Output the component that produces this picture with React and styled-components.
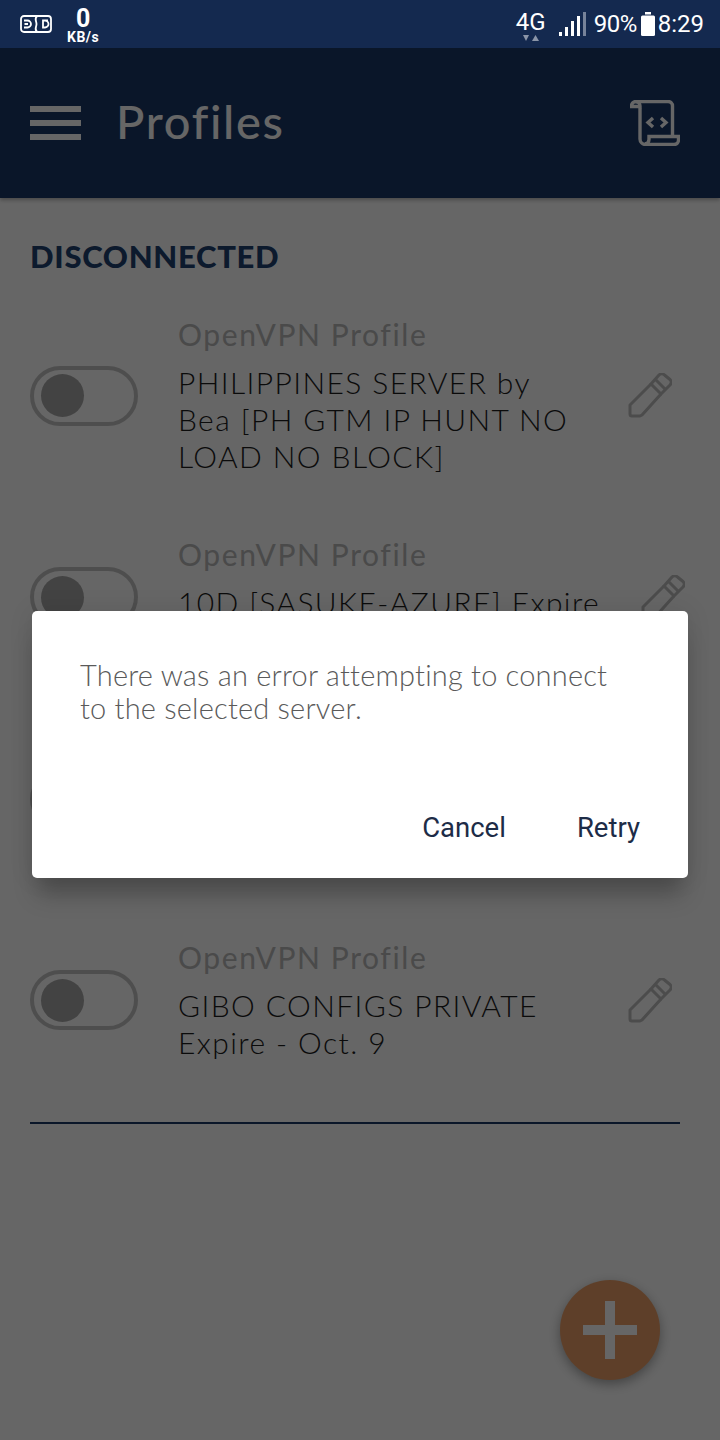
import * as React from 'react';
import styled, { createGlobalStyle } from 'styled-components';

const GlobalStyle = createGlobalStyle`
  html, body {
    margin: 0;
    padding: 0;
    background-color: #ffffff;
  }
`;

const Page = styled.div`
  position: relative;
  width: 720px;
  height: 1440px;
  overflow: hidden;
  font-family: Lato, "Open Sans", sans-serif;
  background-color: #ffffff;
`;

const StatusBar = styled.div`
  position: relative;
  z-index: 2;
  display: flex;
  justify-content: space-between;
  align-items: center;
  height: 48px;
  color: #ffffff;
  font-family: Roboto, sans-serif;
  background-color: #14294f;
  padding-left: 20px;
  padding-right: 16px;
`;

const StatusGroup = styled.div`
  display: flex;
  align-items: center;
`;

const Speed = styled.div`
  display: flex;
  flex-direction: column;
  align-items: center;
  margin-left: 15px;
  font-weight: 700;
`;

const SpeedValue = styled.span`
  font-size: 25px;
  line-height: 23px;
  margin-top: 3px;
`;

const SpeedUnit = styled.span`
  font-size: 14px;
  letter-spacing: 0.5px;
  line-height: 15px;
`;

const Network = styled.div`
  display: flex;
  flex-direction: column;
  align-items: center;
  margin-right: 13px;
`;

const NetworkLabel = styled.span`
  font-size: 24px;
  line-height: 26px;
  margin-top: 2px;
`;

const StatusText = styled.span`
  font-size: 24px;
  letter-spacing: ${props => props.$spacing || 0}px;
  line-height: 48px;
  margin-left: ${props => props.$left}px;
  margin-right: ${props => props.$right || 0}px;
`;

const AppBar = styled.header`
  display: flex;
  align-items: center;
  height: 150px;
  box-sizing: border-box;
  background-color: #193768;
  box-shadow: 0 2px 4px rgba(0, 0, 0, 0.3);
  padding-left: 30px;
  padding-right: 40px;
`;

const Hamburger = styled.div`
  display: flex;
  flex-direction: column;
  gap: 8px;
  width: 51px;
  margin-right: 35px;

  span {
    height: 6px;
    background-color: #ffffff;
  }
`;

const Title = styled.h1`
  flex-grow: 1;
  font-size: 47px;
  font-weight: 500;
  letter-spacing: 1.7px;
  line-height: 1;
  color: #ffffff;
  margin: 0;
  margin-top: -3px;
`;

const Content = styled.main`
  padding-left: 30px;
  padding-right: 40px;
`;

const Heading = styled.h2`
  font-size: 31px;
  font-weight: 900;
  letter-spacing: 0.7px;
  line-height: 40px;
  color: #1f4170;
  margin-top: 38px;
  margin-bottom: 40px;
`;

const Profile = styled.div`
  display: grid;
  grid-template-columns: 108px 1fr 45px;
  column-gap: 40px;
  align-items: center;
  margin-bottom: 61px;
  padding-right: 8px;
`;

const Toggle = styled.div`
  display: flex;
  align-items: center;
  width: 108px;
  height: 60px;
  box-sizing: border-box;
  border: 4px solid #c4c4c4;
  border-radius: 30px;
  padding-left: 7px;
`;

const Knob = styled.div`
  width: 43px;
  height: 43px;
  background-color: #a8a8a8;
  border-radius: 50%;
`;

const ProfileKind = styled.div`
  min-height: 37px;
  font-size: 30px;
  letter-spacing: 1.6px;
  line-height: 37px;
  color: #b8b8b8;
  margin-bottom: 11px;
`;

const ProfileName = styled.div`
  min-height: ${props => props.$minLines * 37}px;
  font-size: 30px;
  font-weight: 300;
  letter-spacing: 1.4px;
  line-height: 37px;
  color: #1c1c1c;
`;

const ProfileLine = styled.div`
  white-space: nowrap;
`;

const Divider = styled.hr`
  height: 2px;
  background-color: #193768;
  border: 0;
  margin: 0;
`;

const Fab = styled.button`
  position: absolute;
  right: 60px;
  bottom: 60px;
  display: flex;
  justify-content: center;
  align-items: center;
  width: 100px;
  height: 100px;
  background-color: #ec9f66;
  border: 0;
  border-radius: 50%;
  box-shadow: 0 4px 12px rgba(0, 0, 0, 0.35);
  padding: 0;
`;

const Scrim = styled.div`
  position: absolute;
  top: 48px;
  left: 0;
  right: 0;
  bottom: 0;
  display: flex;
  justify-content: center;
  align-items: center;
  background-color: rgba(0, 0, 0, 0.6);
`;

const Dialog = styled.div`
  display: flex;
  flex-direction: column;
  width: 656px;
  height: 267px;
  box-sizing: border-box;
  background-color: #ffffff;
  border-radius: 5px;
  box-shadow: 0 22px 22px -6px rgba(0, 0, 0, 0.25), 0 0 24px rgba(0, 0, 0, 0.1);
  padding-top: 47px;
  padding-right: 48px;
  padding-bottom: 32px;
  padding-left: 48px;
`;

const Message = styled.p`
  flex-grow: 1;
  font-size: 29px;
  font-weight: 300;
  letter-spacing: 0.2px;
  line-height: 33px;
  color: #5a5a5a;
  margin: 0;
`;

const Actions = styled.div`
  display: flex;
  justify-content: flex-end;
  gap: 71px;
`;

const Action = styled.button`
  font-family: Roboto, sans-serif;
  font-size: 27.5px;
  line-height: 36px;
  color: #1d2c47;
  background: none;
  border: 0;
  padding: 0;
`;

const SimIcon = () => (
  <svg width="32" height="18" viewBox="0 0 32 18" fill="none" stroke="#fff" strokeWidth="1.8">
    <rect x="1" y="1" width="30" height="16" rx="3" />
    <path d="M4 5.500h3.500a3.500 3.500 0 0 1 0 7H4M4.500 9h3.500" />
    <path d="M17 1c-3 3-.5 5-.5 8s-2.500 5 .5 8" />
    <path d="M28 5.500h-5v7h2a3.500 3.500 0 0 0 0-7" />
  </svg>
);

const NetworkArrows = () => (
  <svg width="16" height="7" viewBox="0 0 16 7" fill="#8b95a8">
    <path d="M0 0h6L3 6z" />
    <path d="M9 6h7l-3.500-6z" />
  </svg>
);

const SignalIcon = () => (
  <svg width="27" height="24" viewBox="0 0 27 24">
    <rect x="0" y="20" width="3" height="4" fill="#fff" />
    <rect x="6" y="15" width="3" height="9" fill="#fff" />
    <rect x="12" y="9" width="3" height="15" fill="#fff" />
    <rect x="18" y="4" width="3" height="20" fill="#fff" />
    <rect x="24" y="0" width="3" height="24" fill="#77839a" />
  </svg>
);

const BatteryIcon = () => (
  <svg width="14" height="24" viewBox="0 0 14 24" fill="#fff">
    <rect x="4" y="0" width="6" height="2.500" />
    <rect x="0" y="3.500" width="14" height="20.500" rx="1.500" />
  </svg>
);

const ScrollIcon = () => (
  <svg width="50" height="46" viewBox="0 0 50 46" fill="none" stroke="#fff" strokeWidth="3.400">
    <path d="M10 8v31a5.500 5.500 0 0 0 5.500 5.500H44a4.500 4.500 0 0 0 4.500-4.500v-3.500H19v3a4.500 4.500 0 0 1-4 4.500" />
    <path d="M6 1.500h32a4.500 4.500 0 0 1 4.500 4.500v30" />
    <path d="M6 1.500A4.500 4.500 0 0 0 1.500 6.500H10V6A4.500 4.500 0 0 0 6 1.500z" />
    <path d="M23 18l-5 4.500 5 4.500M31 18l5 4.500-5 4.500" />
  </svg>
);

const PencilIcon = () => (
  <svg width="45" height="45" viewBox="0 0 45 45" fill="none" stroke="#bdbdbd" strokeWidth="3" strokeLinejoin="round">
    <path d="M24 11L3 32v9a2 2 0 0 0 2 2h8l2-1 19-21" />
    <path d="M24 11l10 10 9-9a4 4 0 0 0 0-5.500L37.500 2a4 4 0 0 0-5.500 0z" />
    <path d="M29 7l9.500 9.500" />
  </svg>
);

const PlusIcon = () => (
  <svg width="54" height="58" viewBox="0 0 54 58" fill="#fff">
    <rect x="22" y="0" width="10" height="58" />
    <rect x="0" y="24" width="54" height="10" />
  </svg>
);

// the third row lies fully behind the dialog, only its toggle edge shows
const profiles = [
  {
    kind: 'OpenVPN Profile',
    lines: ['PHILIPPINES SERVER by', 'Bea [PH GTM IP HUNT NO', 'LOAD NO BLOCK]'],
    minLines: 3,
  },
  {
    kind: 'OpenVPN Profile',
    lines: ['10D [SASUKE-AZURE] Expire'],
    minLines: 2,
  },
  {
    kind: '',
    lines: [],
    minLines: 3,
  },
  {
    kind: 'OpenVPN Profile',
    lines: ['GIBO CONFIGS PRIVATE', 'Expire - Oct. 9'],
    minLines: 2,
  },
];

const App = () => {

  return (
    <Page>
      <GlobalStyle/>

      <StatusBar>
        <StatusGroup>
          <SimIcon/>
          <Speed>
            <SpeedValue>0</SpeedValue>
            <SpeedUnit>KB/s</SpeedUnit>
          </Speed>
        </StatusGroup>

        <StatusGroup>
          <Network>
            <NetworkLabel>4G</NetworkLabel>
            <NetworkArrows/>
          </Network>
          <SignalIcon/>
          <StatusText $left={ 8 } $right={ 4 } $spacing={ -0.5 }>90%</StatusText>
          <BatteryIcon/>
          <StatusText $left={ 3 }>8:29</StatusText>
        </StatusGroup>
      </StatusBar>

      <AppBar>
        <Hamburger>
          <span/>
          <span/>
          <span/>
        </Hamburger>
        <Title>Profiles</Title>
        <ScrollIcon/>
      </AppBar>

      <Content>
        <Heading>DISCONNECTED</Heading>

        { profiles.map((profile, index) => (
          <Profile key={ index }>
            <Toggle>
              <Knob/>
            </Toggle>
            <div>
              <ProfileKind>{ profile.kind }</ProfileKind>
              <ProfileName $minLines={ profile.minLines }>
                { profile.lines.map(line => <ProfileLine key={ line }>{ line }</ProfileLine>) }
              </ProfileName>
            </div>
            <PencilIcon/>
          </Profile>
        )) }

        <Divider/>
      </Content>

      <Fab>
        <PlusIcon/>
      </Fab>

      <Scrim>
        <Dialog>
          <Message>There was an error attempting to connect to the selected server.</Message>
          <Actions>
            <Action>Cancel</Action>
            <Action>Retry</Action>
          </Actions>
        </Dialog>
      </Scrim>
    </Page>
  );
};

export default App;
